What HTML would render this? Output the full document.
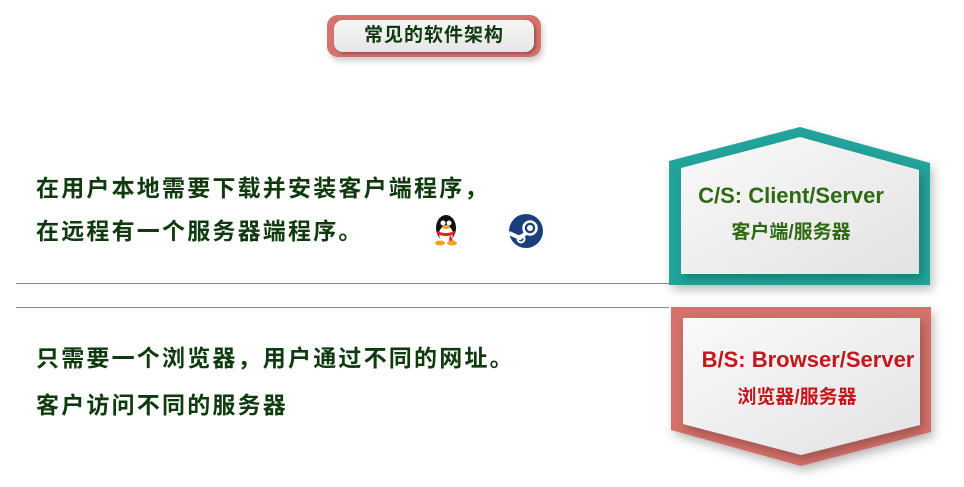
<!DOCTYPE html>
<html><head><meta charset="utf-8"><style>
body{margin:0;width:964px;height:487px;background:#fff;position:relative;overflow:hidden;font-family:"Liberation Sans","Noto Sans CJK SC",sans-serif}
.t{position:absolute;font-weight:bold;color:#0e3a0e;font-size:23px;letter-spacing:2.2px;white-space:nowrap;line-height:30px}
.line{position:absolute;left:16px;width:653px;height:1px;background:#8a8a8a}
</style></head><body>
<div style="position:absolute;left:327px;top:15px;width:214px;height:42px;border-radius:11px;background:#d7736f;box-shadow:2px 4px 6px rgba(0,0,0,.2)"></div>
<div style="position:absolute;left:334px;top:20px;width:200px;height:32px;border-radius:9px;background:linear-gradient(#f6f6f6,#e6e6e8);box-shadow:2px 2px 3px rgba(0,0,0,.3)"></div>
<div style="position:absolute;left:334px;top:20px;width:200px;height:32px;line-height:32px;text-align:center;font-weight:bold;font-size:19px;color:#0e3a0e;letter-spacing:1px">常见的软件架构</div>

<div class="t" style="left:36px;top:173px">在用户本地需要下载并安装客户端程序，</div>
<div class="t" style="left:36px;top:216px">在远程有一个服务器端程序。</div>
<div class="t" style="left:36px;top:343px">只需要一个浏览器，用户通过不同的网址。</div>
<div class="t" style="left:36px;top:390px">客户访问不同的服务器</div>

<div class="line" style="top:283px"></div>
<div class="line" style="top:307px"></div>

<svg width="964" height="487" style="position:absolute;left:0;top:0">
<defs>
<linearGradient id="g" x1="0" y1="0" x2="1" y2="1"><stop offset="0" stop-color="#fafafa"/><stop offset="1" stop-color="#e2e2e4"/></linearGradient>
<filter id="s" x="-10%" y="-10%" width="130%" height="130%"><feDropShadow dx="3" dy="5" stdDeviation="5" flood-opacity=".25"/></filter>
</defs>
<polygon points="669,161 800,127 930,163 930,285 669,285" fill="#24a39c" filter="url(#s)"/>
<polygon points="681,168 800,137 919,170 919,274 681,274" fill="url(#g)" filter="url(#s)"/>
<polygon points="671,307 931,307 931,432 801,466 671,430" fill="#d5706b" filter="url(#s)"/>
<polygon points="683,318 920,318 920,425 801,455 683,424" fill="url(#g)" filter="url(#s)"/>
<g transform="translate(433,214)">
<ellipse cx="13" cy="14" rx="10" ry="13" fill="#111"/>
<ellipse cx="13" cy="20" rx="7" ry="8" fill="#fff"/>
<circle cx="10" cy="9" r="2.5" fill="#fff"/><circle cx="16" cy="9" r="2.5" fill="#fff"/>
<ellipse cx="13" cy="13" rx="4" ry="2" fill="#f3a41b"/>
<path d="M4 17 Q13 21 22 17 L22 20 Q13 24 4 20Z" fill="#e3211c"/>
<path d="M17 20 l3 7 l-4 0z" fill="#e3211c"/>
<ellipse cx="7" cy="29" rx="5" ry="2.5" fill="#f3a41b"/><ellipse cx="19" cy="29" rx="5" ry="2.5" fill="#f3a41b"/>
</g>
<g transform="translate(526,231)">
<circle r="17" fill="#1b3f7a"/>
<circle cx="4" cy="-3" r="6.5" fill="none" stroke="#fff" stroke-width="2.5"/>
<circle cx="4" cy="-3" r="3" fill="#fff"/>
<path d="M-17 2 L-6 7 L0 2" stroke="#fff" stroke-width="4" fill="none"/>
<circle cx="-5" cy="8" r="3.5" fill="none" stroke="#fff" stroke-width="2"/>
</g>
</svg>

<div style="position:absolute;left:672px;top:183px;width:238px;text-align:center;font-weight:bold;font-size:22px;color:#2f6a12">C/S: Client/Server</div>
<div style="position:absolute;left:672px;top:217px;width:238px;text-align:center;font-weight:bold;font-size:19px;color:#2f6a12">客户端/服务器</div>
<div style="position:absolute;left:683px;top:347px;width:250px;text-align:center;font-weight:bold;font-size:22px;color:#c4161c">B/S: Browser/Server</div>
<div style="position:absolute;left:678px;top:382px;width:238px;text-align:center;font-weight:bold;font-size:19px;color:#c4161c">浏览器/服务器</div>
</body></html>
